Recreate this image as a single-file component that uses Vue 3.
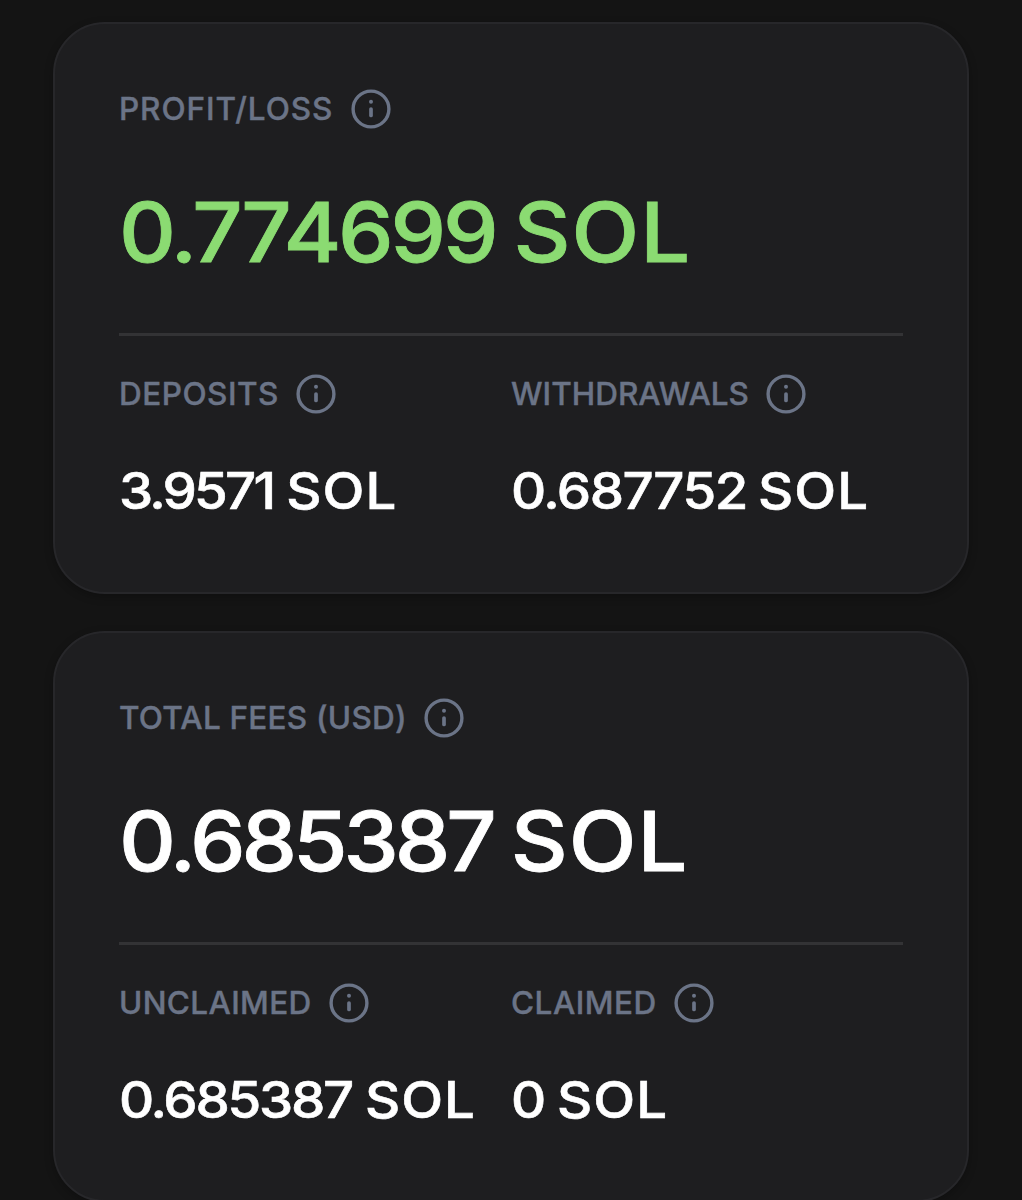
<template>
  <main class="stats">
    <section v-for="card in cards" :key="card.title" class="card">
      <div class="label">
        <span :class="['label-text', card.key]">{{ card.title }}</span>
        <svg class="info-icon" viewBox="0 0 40 40" fill="none">
          <circle cx="20" cy="20" r="17.9" stroke="currentColor" stroke-width="3.4" />
          <path d="M20 20V26.5" stroke="currentColor" stroke-width="3.7" stroke-linecap="round" />
          <circle cx="20" cy="12.8" r="2" fill="currentColor" />
        </svg>
      </div>
      <div :class="['total', card.key, { positive: card.positive }]">
        <span class="number">{{ card.amount }}</span>
        <span class="unit">SOL</span>
      </div>

      <div class="details">
        <div v-for="item in card.items" :key="item.title" class="detail">
          <div class="label">
            <span :class="['label-text', item.key]">{{ item.title }}</span>
            <svg class="info-icon" viewBox="0 0 40 40" fill="none">
              <circle cx="20" cy="20" r="17.9" stroke="currentColor" stroke-width="3.4" />
              <path d="M20 20V26.5" stroke="currentColor" stroke-width="3.7" stroke-linecap="round" />
              <circle cx="20" cy="12.8" r="2" fill="currentColor" />
            </svg>
          </div>
          <div :class="['value', item.key]">
            <span class="number">{{ item.amount }}</span>
            <span class="unit">SOL</span>
          </div>
        </div>
      </div>
    </section>
  </main>
</template>

<script setup>
const cards = [
  {
    key: 'profit',
    title: 'PROFIT/LOSS',
    amount: '0.774699',
    positive: true,
    items: [
      { key: 'deposits', title: 'DEPOSITS', amount: '3.9571' },
      { key: 'withdrawals', title: 'WITHDRAWALS', amount: '0.687752' }
    ]
  },
  {
    key: 'fees',
    title: 'TOTAL FEES (USD)',
    amount: '0.685387',
    positive: false,
    items: [
      { key: 'unclaimed', title: 'UNCLAIMED', amount: '0.685387' },
      { key: 'claimed', title: 'CLAIMED', amount: '0' }
    ]
  }
];
</script>

<style>
body {
  background-color: #141414;
}
</style>

<style scoped>
.stats {
  box-sizing: border-box;
  height: 1200px;
  padding: 22px 53px 0;
  overflow: hidden;
  background-color: #141414;
  font-family: Inter, "Liberation Sans", sans-serif;
  font-weight: 500;
}

.card {
  box-sizing: border-box;
  height: 571.5px;
  margin-bottom: 37px;
  padding: 65px 64px 0;
  border: 2px solid #27272a;
  border-radius: 52px;
  background-color: #1e1e20;
  box-shadow: 0 3px 8px rgba(0, 0, 0, 0.25);
}

.label {
  display: flex;
  align-items: center;
  gap: 17.4px;
  height: 40px;
  color: #6b7487;
  font-size: 31.5px;
  line-height: 40px;
  white-space: nowrap;
}

.label-text {
  -webkit-text-stroke: 0.4px currentColor;
}

.label-text.profit {
  letter-spacing: 0.9px;
}

.label-text.fees {
  letter-spacing: 0.23px;
}

.label-text.unclaimed {
  letter-spacing: 0.35px;
}

.label-text.deposits,
.label-text.claimed {
  letter-spacing: 0.5px;
}

.info-icon {
  flex: none;
  width: 40px;
  height: 40px;
}

/* 数字整体略微加宽 */
.total,
.value {
  display: flex;
  width: max-content;
  color: #fff;
  white-space: nowrap;
  transform: scaleX(1.07);
  transform-origin: left center;
}

.total {
  height: 100px;
  margin-top: 53px;
  font-size: 82.5px;
  line-height: 100px;
  -webkit-text-stroke: 0.8px currentColor;
}

.total.positive {
  color: #8bdb72;
}

.total.profit .number {
  letter-spacing: -3px;
}

.total.fees .number {
  letter-spacing: -3.8px;
}

.total .unit {
  margin-left: 17px;
  letter-spacing: 1px;
}

.details {
  display: grid;
  grid-template-columns: 1fr 1fr;
  margin-top: 51px;
  padding-top: 38px;
  border-top: 3px solid #333335;
}

.value {
  height: 64px;
  margin-top: 45px;
  font-size: 51px;
  line-height: 64px;
  -webkit-text-stroke: 0.6px currentColor;
}

.value .unit {
  margin-left: 10px;
  letter-spacing: 1px;
}

.value.deposits .number {
  letter-spacing: -2.6px;
}

.value.deposits .unit {
  margin-left: 12px;
}

.value.withdrawals .number {
  letter-spacing: -1.4px;
}

.value.withdrawals .unit {
  margin-left: 10.4px;
}

.value.unclaimed .number {
  letter-spacing: -2.1px;
}

.value.unclaimed .unit {
  margin-left: 12px;
}
</style>
